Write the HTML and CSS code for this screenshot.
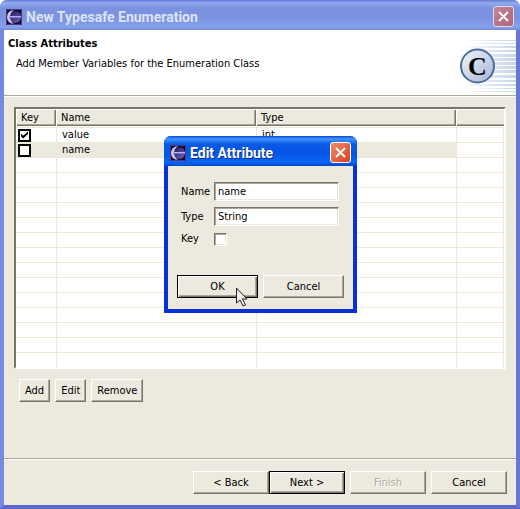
FILE: index.html
```
<!DOCTYPE html>
<html lang="en">
<head>
<meta charset="utf-8">
<title>New Typesafe Enumeration</title>
<link rel="stylesheet" href="styles.css">
</head>
<body>
<svg width="0" height="0" class="defs" aria-hidden="true">
  <defs>
    <linearGradient id="lens" x1="0" x2="1" y1="0" y2="1"><stop offset="0" stop-color="#1c1250"/><stop offset="1" stop-color="#7068ba"/></linearGradient>
    <linearGradient id="disc" x1="0" x2="1" y1="0" y2="1"><stop offset="0" stop-color="#f4f7fc"/><stop offset="1" stop-color="#a3b4d4"/></linearGradient>
    <linearGradient id="fade" gradientUnits="userSpaceOnUse" x1="6" x2="60" y1="0" y2="0"><stop offset="0" stop-color="#fff"/><stop offset="1" stop-color="#c6d3e9"/></linearGradient>
    <symbol id="eclipse" viewBox="0 0 16 16">
      <rect width="16" height="16" fill="#130a35"/>
      <path d="M.5.5h15v15H.5z" fill="none" stroke="#4a3880"/>
      <circle cx="9" cy="8" r="6" fill="url(#lens)"/>
      <path d="M8 1Q1 2 1 8t7 7Q4 12 4 8t4-7z" fill="#cdc6ee"/>
      <path d="M3 7.500h12" stroke="#b8b0f4"/>
      <path d="M3 8.500h12" stroke="#7c70d4"/>
    </symbol>
  </defs>
</svg>
<main class="window wizard">
  <header class="titlebar">
    <svg class="app-icon" aria-hidden="true"><use href="#eclipse"/></svg>
    <h1>New Typesafe Enumeration</h1>
    <button class="close" aria-label="Close wizard"><svg viewBox="0 0 11 11"><path d="M1 1l9 9M10 1l-9 9"/></svg></button>
  </header>
  <section class="banner">
    <div>
      <h2>Class Attributes</h2>
      <p>Add Member Variables for the Enumeration Class</p>
    </div>
    <svg class="emblem" viewBox="0 0 60 64" aria-hidden="true">
      <g stroke="url(#fade)" fill="none">
        <path stroke-width="1" d="M14 10.500h46M12 13.500h48M8 58.500h52M14 61.500h46"/>
        <path stroke-width="2" d="M8 17h52M6 21h54M6 51h54M8 55h52"/>
        <path stroke-width="3" d="M6 25.500h54M6 29.500h54M6 33.500h54M6 37.500h54M6 41.500h54M6 46.500h54"/>
      </g>
      <circle cx="21.500" cy="36" r="16.500" fill="url(#disc)" stroke="#4b6c9f" stroke-width="2"/>
      <text x="21.500" y="45" text-anchor="middle">C</text>
    </svg>
  </section>
  <section class="page">
    <div class="grid-box">
      <table>
        <colgroup><col class="c-key"><col class="c-name"><col class="c-type"><col></colgroup>
        <thead><tr><th>Key</th><th>Name</th><th>Type</th><th></th></tr></thead>
        <tbody>
          <tr><td><input type="checkbox" class="mark" aria-label="value is key" checked></td><td>value</td><td>int</td><td></td></tr>
          <tr class="selected"><td><input type="checkbox" class="mark" aria-label="name is key"></td><td>name</td><td></td><td></td></tr>
          <tr><td></td><td></td><td></td><td></td></tr>
          <tr><td></td><td></td><td></td><td></td></tr>
          <tr><td></td><td></td><td></td><td></td></tr>
          <tr><td></td><td></td><td></td><td></td></tr>
          <tr><td></td><td></td><td></td><td></td></tr>
          <tr><td></td><td></td><td></td><td></td></tr>
          <tr><td></td><td></td><td></td><td></td></tr>
          <tr><td></td><td></td><td></td><td></td></tr>
          <tr><td></td><td></td><td></td><td></td></tr>
          <tr><td></td><td></td><td></td><td></td></tr>
          <tr><td></td><td></td><td></td><td></td></tr>
          <tr><td></td><td></td><td></td><td></td></tr>
          <tr><td></td><td></td><td></td><td></td></tr>
          <tr><td></td><td></td><td></td><td></td></tr>
        </tbody>
      </table>
    </div>
    <div class="tools">
      <button class="btn">Add</button><button class="btn">Edit</button><button class="btn">Remove</button>
    </div>
  </section>
  <footer class="nav">
    <div class="pair"><button class="btn wide">&lt; Back</button><button class="btn wide default">Next &gt;</button></div>
    <button class="btn wide" disabled>Finish</button>
    <button class="btn wide">Cancel</button>
  </footer>
</main>
<section class="window dialog" role="dialog" aria-labelledby="dialog-title">
  <header class="titlebar">
    <svg class="app-icon" aria-hidden="true"><use href="#eclipse"/></svg>
    <h1 id="dialog-title">Edit Attribute</h1>
    <button class="close" aria-label="Close dialog"><svg viewBox="0 0 11 11"><path d="M1 1l9 9M10 1l-9 9"/></svg></button>
  </header>
  <form class="fields">
    <label for="f-name">Name</label><input id="f-name" type="text" value="name">
    <label for="f-type">Type</label><input id="f-type" type="text" value="String">
    <label for="f-key">Key</label><input id="f-key" type="checkbox" class="sunken">
  </form>
  <div class="actions">
    <button class="btn default">OK</button><button class="btn">Cancel</button>
  </div>
  <svg class="pointer" viewBox="0 0 12 20" aria-hidden="true"><path d="M.5 1v15l3.500-3 3 6 2.500-1-3-6H11z"/></svg>
</section>
</body>
</html>
```
FILE: styles.css
```
* { box-sizing: border-box; }
body {
  margin: 0;
  font: 11px/14px Tahoma, "DejaVu Sans Condensed", sans-serif;
  color: #000;
  background: #fff;
}
h1, h2, p { margin: 0; }
.defs { position: absolute; }
button, input { font: inherit; color: inherit; margin: 0; }

.window { display: flex; flex-direction: column; background: #ece9de; }
.wizard {
  min-height: 100vh;
  border: 4px solid #748ae0;
  border-top: 0;
  border-right-color: #6478d6;
  border-bottom-color: #5c68cc;
  border-radius: 7px 7px 0 0;
}
.titlebar {
  display: flex;
  align-items: center;
  gap: 4px;
  height: 30px;
  padding: 3px 6px 0;
  margin: 0 -4px;
  border-radius: 7px 7px 0 0;
  background: linear-gradient(#6479da, #92aaec 3px, #7b92e0 8px, #7b92e0 18px, #86a2ec 27px, #7488dc);
}
.titlebar h1 {
  flex: 1;
  font: bold 14px/16px "Trebuchet MS", Roboto, sans-serif;
  color: #dbe4f8;
  white-space: nowrap;
}
.app-icon { width: 16px; height: 16px; }
.close {
  width: 21px;
  height: 21px;
  padding: 4px;
  border: 1px solid #d5dcf6;
  border-radius: 3px;
  background: linear-gradient(135deg, #c98594, #b0637c);
}
.close svg { display: block; width: 11px; height: 11px; }
.close path { stroke: #fff; stroke-width: 2; fill: none; }

.banner {
  display: flex;
  justify-content: space-between;
  height: 66px;
  padding: 7px 0 0 4px;
  background: #fff;
  border-bottom: 1px solid #aca899;
}
.banner h2 { font-size: 11px; font-weight: bold; }
.banner p { margin: 6px 0 0 8px; }
.emblem { width: 60px; height: 64px; margin-top: -7px; }
.emblem text { font: bold 26px "Liberation Serif", serif; }

.page { flex: 1; padding: 10px; border-top: 1px solid #fff; }
.grid-box {
  border: 2px solid;
  border-color: #77746a #fff #fff #77746a;
  background: #fff;
}
table { width: 100%; table-layout: fixed; border-collapse: separate; border-spacing: 0; }
.c-key { width: 40px; }
.c-name, .c-type { width: 200px; }
th {
  height: 18px;
  padding: 0 0 0 5px;
  text-align: left;
  font-weight: normal;
  background: #ece9de;
  border-bottom: 1px solid #fff;
  box-shadow: inset 1px 1px #fff, inset -1px -1px #77746a, inset -2px -2px #aca899;
}
th:last-child { box-shadow: inset 1px 1px #fff, inset 0 -1px #77746a, inset 0 -2px #aca899; }
td {
  height: 15px;
  padding: 0 0 0 5px;
  border-top: 1px solid #ece9d8;
  border-left: 1px solid #ece9d8;
}
td:first-child { border-left: 0; padding-left: 2px; }
td:last-child { border-right: 1px solid #ece9d8; }
.selected td:not(:last-child) { background: #ece9de; }

input[type="checkbox"] { appearance: none; display: block; width: 13px; height: 13px; background: #fff; }
.mark { border: 2px solid #000; }
.mark:checked::before {
  content: "";
  display: block;
  width: 7px;
  height: 7px;
  margin: 1px;
  background: #000;
  clip-path: polygon(0 30%, 30% 60%, 100% 0, 100% 35%, 30% 100%, 0 70%);
}
.sunken { border: 1px solid; border-color: #77746a #fff #fff #77746a; box-shadow: inset 1px 1px #aca899, inset -1px -1px #ece9de; }

.btn {
  height: 23px;
  padding: 0 5px;
  border: 1px solid;
  border-color: #fff #77746a #77746a #fff;
  background: #ece9de;
  box-shadow: inset -1px -1px #aca899;
  text-align: center;
  white-space: nowrap;
}
.btn.default { border-color: #000; box-shadow: inset 1px 1px #fff, inset -1px -1px #77746a, inset -2px -2px #aca899; }
.btn:disabled { color: #aca899; text-shadow: 1px 1px #fff; }
.tools { display: flex; gap: 5px; padding: 10px 5px 0; }
.nav {
  display: flex;
  justify-content: flex-end;
  gap: 5px;
  padding: 12px 9px 11px;
  border-top: 1px solid #aca899;
  box-shadow: inset 0 1px #fff;
}
.pair { display: flex; }
.wide { width: 76px; }

/* The dialog floats over the wizard. */
.dialog {
  position: absolute;
  top: 136px;
  left: calc(50% - 96px);
  width: 193px;
  border: 4px solid #0831d9;
  border-top: 0;
  border-radius: 7px 7px 0 0;
  padding-bottom: 11px;
}
.dialog .titlebar { background: linear-gradient(#0a4bd0, #3f94ff 3px, #0a5ae8 8px, #0554e4 18px, #0668fa 26px, #0346c8); }
.dialog h1 { color: #fff; text-shadow: 1px 1px #0b2a8c; }
.dialog .close { border-color: #fff; background: linear-gradient(135deg, #ee8c6c, #d8401c); }
.fields {
  display: grid;
  grid-template-columns: 28px 1fr;
  gap: 6px 5px;
  align-items: center;
  padding: 16px 14px 29px 13px;
}
.fields input[type="text"] {
  width: 100%;
  min-width: 0;
  height: 19px;
  padding: 0 3px;
  border: 1px solid;
  border-color: #77746a #fff #fff #77746a;
  background: #fff;
  box-shadow: inset 1px 1px #aca899, inset -1px -1px #ece9de;
}
.actions { display: flex; gap: 5px; padding: 0 9px; }
.actions .btn { flex: 1; }
.pointer { position: absolute; left: 68px; top: 151px; width: 12px; height: 20px; }
.pointer path { fill: #eee; stroke: #222; }
```
